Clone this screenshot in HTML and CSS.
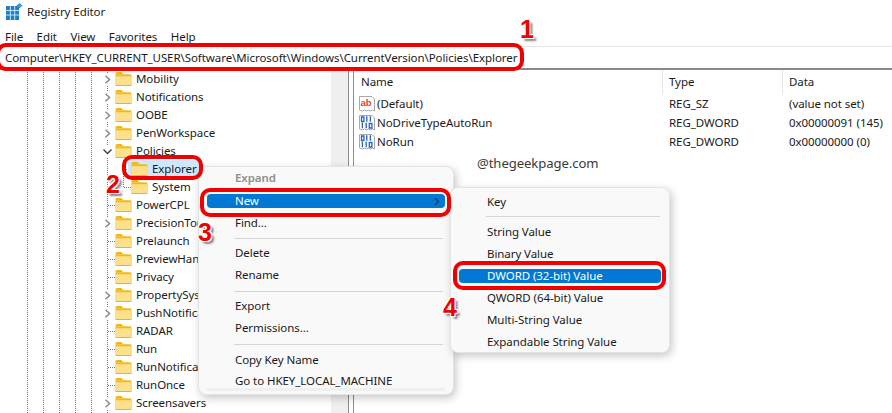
FILE: index.html
```html
<!DOCTYPE html>
<html lang="en">
<head>
<meta charset="utf-8">
<title>Registry Editor</title>
<link rel="stylesheet" href="styles.css">
</head>
<body>
<svg class="defs" width="0" height="0" aria-hidden="true">
  <symbol id="folder" viewBox="0 0 17 16">
    <path d="M0.5 2.5q0-1.5 1.5-1.5h4.5l2 2.2h-8z" fill="#f5b70f"/>
    <path d="M0.5 3.2h14.5q1.5 0 1.5 1.5v9.3q0 1-1 1h-14q-1 0-1-1z" fill="#f6b90f"/>
    <path d="M0.5 5.2h16v8.8q0 1-1 1h-14q-1 0-1-1z" fill="#fde08c"/>
    <path d="M0.5 14h16v.3q0 .7-1 .7h-14q-1 0-1-.7z" fill="#eeb030"/>
  </symbol>
  <symbol id="chev" viewBox="0 0 9 9"><path d="M2.5 0.7L6.6 4.5L2.5 8.3" fill="none" stroke="#8a8a8a" stroke-width="1.5"/></symbol>
  <symbol id="chevd" viewBox="0 0 9 9"><path d="M0.5 2.5L4.5 6.5L8.5 2.5" fill="none" stroke="#444" stroke-width="1.5"/></symbol>
  <symbol id="doc" viewBox="0 0 16 16">
    <path d="M0.5 0.5h12.5l2.5 2.5v12l-2-1-2 1-2-1-2 1-2-1-2 1-3-1z" fill="#fff" stroke="#a8a8a8"/>
  </symbol>
  <symbol id="bin" viewBox="0 0 16 16">
    <path d="M0.5 0.5h12.5l2.5 2.5v12l-2-1-2 1-2-1-2 1-2-1-2 1-3-1z" fill="#fff" stroke="#a8a8a8"/>
    <path d="M2.5 2h2.4v4.5H2.5zM7 2h1.4M7.8 2v4.8M10.6 2h1.4M11.4 2v4.8M2.6 8.5h1.4M3.4 8.5v4.8M6.4 8.5h1.4M7.2 8.5v4.8M10.3 8.5h2.6v4.5h-2.6z" fill="none" stroke="#2a63bd" stroke-width="1.3"/>
  </symbol>
</svg>

<header class="titlebar">
  <svg class="appicon" width="17" height="17" viewBox="0 0 17 17" aria-hidden="true">
    <rect x="0" y="3" width="13" height="14" fill="#1e7fc4"/>
    <path d="M0 7.5h13M0 12h13M4.4 3v14M8.7 3v14" stroke="#bfe3f7" stroke-width="1"/>
    <path d="M13.5 0l3 2.6-3 2.9-3-2.9z" fill="#2f9fe0"/>
  </svg>
  <span>Registry Editor</span>
</header>
<nav class="menubar"><span>File</span><span>Edit</span><span>View</span><span>Favorites</span><span>Help</span></nav>
<div class="address">Computer\HKEY_CURRENT_USER\Software\Microsoft\Windows\CurrentVersion\Policies\Explorer</div>

<main class="split">
  <section class="tree">
    <div class="row"><span class="twist"><svg width="9" height="9"><use href="#chev"/></svg></span><svg class="fld" width="17" height="16"><use href="#folder"/></svg><span class="lbl">Mobility</span></div>
    <div class="row"><span class="twist"><svg width="9" height="9"><use href="#chev"/></svg></span><svg class="fld" width="17" height="16"><use href="#folder"/></svg><span class="lbl">Notifications</span></div>
    <div class="row"><span class="twist"><svg width="9" height="9"><use href="#chev"/></svg></span><svg class="fld" width="17" height="16"><use href="#folder"/></svg><span class="lbl">OOBE</span></div>
    <div class="row"><span class="twist"><svg width="9" height="9"><use href="#chev"/></svg></span><svg class="fld" width="17" height="16"><use href="#folder"/></svg><span class="lbl">PenWorkspace</span></div>
    <div class="row"><span class="twist"><svg width="9" height="9"><use href="#chevd"/></svg></span><svg class="fld" width="17" height="16"><use href="#folder"/></svg><span class="lbl">Policies</span></div>
    <div class="row child"><span class="twist dots branch"></span><span class="sel"><svg class="fld" width="17" height="16"><use href="#folder"/></svg><span class="lbl">Explorer</span></span></div>
    <div class="row child"><span class="twist dots last"></span><svg class="fld" width="17" height="16"><use href="#folder"/></svg><span class="lbl">System</span></div>
    <div class="row"><span class="twist dots"></span><svg class="fld" width="17" height="16"><use href="#folder"/></svg><span class="lbl">PowerCPL</span></div>
    <div class="row"><span class="twist"><svg width="9" height="9"><use href="#chev"/></svg></span><svg class="fld" width="17" height="16"><use href="#folder"/></svg><span class="lbl">PrecisionTouchPad</span></div>
    <div class="row"><span class="twist dots"></span><svg class="fld" width="17" height="16"><use href="#folder"/></svg><span class="lbl">Prelaunch</span></div>
    <div class="row"><span class="twist dots"></span><svg class="fld" width="17" height="16"><use href="#folder"/></svg><span class="lbl">PreviewHandlers</span></div>
    <div class="row"><span class="twist dots"></span><svg class="fld" width="17" height="16"><use href="#folder"/></svg><span class="lbl">Privacy</span></div>
    <div class="row"><span class="twist"><svg width="9" height="9"><use href="#chev"/></svg></span><svg class="fld" width="17" height="16"><use href="#folder"/></svg><span class="lbl">PropertySystem</span></div>
    <div class="row"><span class="twist"><svg width="9" height="9"><use href="#chev"/></svg></span><svg class="fld" width="17" height="16"><use href="#folder"/></svg><span class="lbl">PushNotifications</span></div>
    <div class="row"><span class="twist dots"></span><svg class="fld" width="17" height="16"><use href="#folder"/></svg><span class="lbl">RADAR</span></div>
    <div class="row"><span class="twist dots"></span><svg class="fld" width="17" height="16"><use href="#folder"/></svg><span class="lbl">Run</span></div>
    <div class="row"><span class="twist dots"></span><svg class="fld" width="17" height="16"><use href="#folder"/></svg><span class="lbl">RunNotification</span></div>
    <div class="row"><span class="twist dots"></span><svg class="fld" width="17" height="16"><use href="#folder"/></svg><span class="lbl">RunOnce</span></div>
    <div class="row"><span class="twist"><svg width="9" height="9"><use href="#chev"/></svg></span><svg class="fld" width="17" height="16"><use href="#folder"/></svg><span class="lbl">Screensavers</span></div>
  </section>
  <div class="scrollbar"></div>
  <div class="sash"></div>
  <section class="values">
    <div class="vhead"><span>Name</span><span>Type</span><span>Data</span></div>
    <div class="vrow">
      <span class="vname"><svg class="vicon" width="16" height="16" viewBox="0 0 16 16"><use href="#doc"/><text x="1.5" y="10" class="ab">ab</text></svg>(Default)</span><span>REG_SZ</span><span>(value not set)</span>
    </div>
    <div class="vrow">
      <span class="vname"><svg class="vicon" width="16" height="16" viewBox="0 0 16 16"><use href="#bin"/></svg>NoDriveTypeAutoRun</span><span>REG_DWORD</span><span>0x00000091 (145)</span>
    </div>
    <div class="vrow">
      <span class="vname"><svg class="vicon" width="16" height="16" viewBox="0 0 16 16"><use href="#bin"/></svg>NoRun</span><span>REG_DWORD</span><span>0x00000000 (0)</span>
    </div>
    <p class="watermark">@thegeekpage.com</p>
  </section>
</main>

<div class="menu main-menu">
  <div class="mi dis">Expand</div>
  <div class="mi active first">New<svg class="arrow" width="6" height="9" viewBox="0 0 6 9"><path d="M1 1l3.5 3.5L1 8" fill="none" stroke="#14304f" stroke-width="1.2"/></svg></div>
  <div class="mi">Find...</div>
  <hr class="sep">
  <div class="mi">Delete</div>
  <div class="mi">Rename</div>
  <hr class="sep s2">
  <div class="mi">Export</div>
  <div class="mi">Permissions...</div>
  <hr class="sep s3">
  <div class="mi">Copy Key Name</div>
  <div class="mi goto">Go to HKEY_LOCAL_MACHINE</div>
</div>

<div class="menu sub-menu">
  <div class="mi">Key</div>
  <hr class="sep">
  <div class="mi">String Value</div>
  <div class="mi">Binary Value</div>
  <div class="mi active">DWORD (32-bit) Value</div>
  <div class="mi">QWORD (64-bit) Value</div>
  <div class="mi">Multi-String Value</div>
  <div class="mi">Expandable String Value</div>
</div>

<div class="ring ring-addr"></div>
<div class="ring ring-exp"></div>
<div class="ring ring-new"></div>
<div class="ring ring-dword"></div>
<span class="num n1">1</span>
<span class="num n2">2</span>
<span class="num n3">3</span>
<span class="num n4">4</span>
</body>
</html>
```
FILE: styles.css
```css
* { box-sizing: border-box; }
html, body { margin: 0; height: 100%; }
body {
  width: 892px; height: 413px; overflow: hidden; position: relative;
  background: #fff; color: #1a1a1a;
  font: 11.5px/16px "Noto Sans", "Open Sans", sans-serif;
  letter-spacing: -0.07px;
  display: flex; flex-direction: column;
}
.defs { position: absolute; }

.titlebar { height: 26px; display: flex; align-items: center; gap: 4px; padding: 0 0 2px 6px; font-size: 11.5px; }
.appicon { flex: none; margin-top: -2px; }
.menubar { height: 20px; display: flex; gap: 13.5px; padding: 2px 0 0 5px; align-items: center; }
.address {
  height: 24px; flex: none; padding-left: 5px; line-height: 22px; white-space: nowrap;
  border-top: 1px solid #e6e6e6; border-bottom: 2px solid #8a8a8a;
}

.split { flex: 1; display: flex; min-height: 0; }
.tree {
  width: 331px; flex: none; overflow: hidden;
  background-image:
    linear-gradient(#777 50%, transparent 50%), linear-gradient(#777 50%, transparent 50%),
    linear-gradient(#777 50%, transparent 50%), linear-gradient(#777 50%, transparent 50%),
    linear-gradient(#777 50%, transparent 50%), linear-gradient(#777 50%, transparent 50%);
  background-size: 1px 2px;
  background-repeat: repeat-y;
  background-position: 27px 0, 43px 0, 59px 0, 75px 0, 91px 0, 107px 0;
}
.row { height: 18px; display: flex; align-items: center; padding-left: 100px; white-space: nowrap; }
.row.child { padding-left: 116px; }
.twist { width: 15px; height: 18px; flex: none; display: flex; align-items: center; justify-content: center; padding-right: 1px; }
.twist svg { background: #fff; height: 11px; padding: 1px 0; }
.dots {
  background-image: linear-gradient(to right, #777 50%, transparent 50%);
  background-size: 2px 1px; background-repeat: repeat-x;
  background-position: 0 9px; background-clip: content-box;
  padding-left: 7px; padding-right: 0;
}
.branch::before, .last::before {
  content: ""; width: 1px; height: 100%; align-self: flex-start; margin-right: auto;
  background-image: linear-gradient(#777 50%, transparent 50%); background-size: 1px 2px;
}
.last::before { height: 50%; }
.fld { flex: none; }
.lbl { margin-left: 4px; }
.sel { display: flex; align-items: center; height: 18px; background: #cce8ff; margin-left: -3px; padding: 0 4px 0 3px; }

.scrollbar { width: 17px; flex: none; background: #f0f0f0; }
.sash { width: 6px; flex: none; border-left: 1px solid #8c8c8c; border-right: 1px solid #8c8c8c; }
.values { flex: 1; min-width: 0; }
.vhead, .vrow { display: grid; grid-template-columns: 308px 120px 1fr; }
.vhead { height: 24px; align-items: center; }
.vhead span { padding-left: 6px; border-left: 1px solid #e5e5e5; height: 24px; line-height: 24px; }
.vhead span:first-child { border-left: 0; padding-left: 7px; }
.vrow { height: 19px; align-items: center; }
.vrow > span { padding-left: 7px; }
.vrow > .vname { display: flex; align-items: center; padding-left: 5px; gap: 2px; }
.vicon { flex: none; }
.ab { font: bold 9.5px "Liberation Sans", sans-serif; fill: #d9481c; letter-spacing: 0; }
.watermark { margin: 3px 0 0 123px; font-size: 13.1px; line-height: 18px; color: #3a3a3a; }

.menu {
  position: absolute; background: #f9f9f9; border: 1px solid #e4e4e4; border-radius: 8px;
  box-shadow: 2px 3px 8px rgba(0,0,0,.22); padding: 0 8px;
}
.main-menu { left: 198px; top: 166px; width: 256px; height: 229px; }
.sub-menu { left: 450px; top: 187px; width: 220px; height: 166px; padding-top: 3px; }
.mi { height: 22px; padding-left: 28px; display: flex; align-items: center; position: relative; }
.dis { color: #8e8e8e; font-weight: 600; }
.active { background: #0078d4; color: #fff; border-radius: 4px; height: 14px; margin: 4px 0; }
.active.first { margin-top: 5px; }
.arrow { position: absolute; right: 5px; top: 3px; }
.sep { border: 0; height: 1px; background: #d5d5d5; margin: 4px 2px 3px 27px; }
.sub-menu .sep { margin: 3px 1px 4px 27px; }
.main-menu .s2 { margin: 5px 2px 3px 27px; }
.main-menu .s3 { margin: 5px 2px 4px 27px; }
.goto { margin-top: -1px; background: linear-gradient(#f9f9f9 18px, #f0f0f0 18px 21px, #f9f9f9 21px); }

.ring { position: absolute; border: 4px solid #f00000; border-radius: 10px; }
.ring-addr { left: -4px; top: 43px; width: 528px; height: 28px; }
.ring-exp { left: 122px; top: 155px; width: 81px; height: 25px; }
.ring-new { left: 200px; top: 188px; width: 251px; height: 29px; }
.ring-dword { left: 453px; top: 261px; width: 213px; height: 29px; }
.num {
  position: absolute; font: bold 25px/26px "Liberation Sans", sans-serif; letter-spacing: 0; color: #f00000;
  text-shadow: -1px -1px 0 #fff, 1px -1px 0 #fff, -1px 1px 0 #fff, 1px 1px 0 #fff, 0 -1px 0 #fff, 0 1px 0 #fff, 3px 3px 2px #888;
}
.n1 { left: 520px; top: 16px; }
.n2 { left: 106px; top: 171px; }
.n3 { left: 198px; top: 219px; }
.n4 { left: 443px; top: 294px; }
```
